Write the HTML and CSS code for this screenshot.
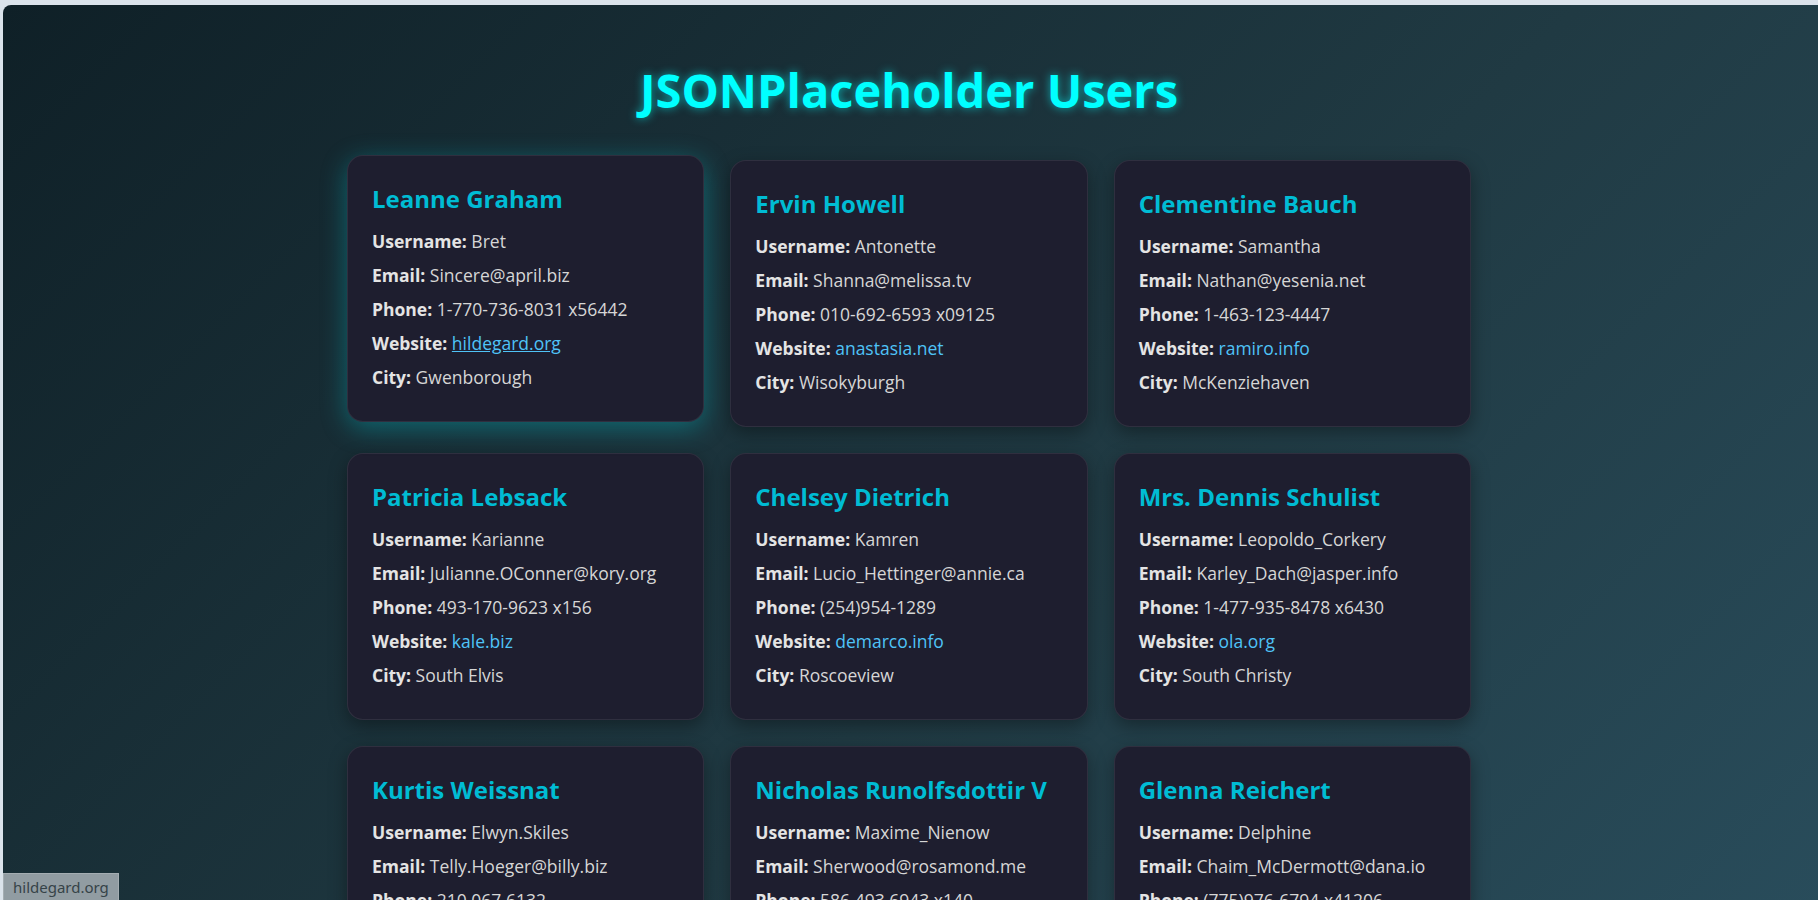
FILE: index.html
```html
<!DOCTYPE html>
<html lang="en">
<head>
<meta charset="utf-8">
<title>JSONPlaceholder Users</title>
<link rel="stylesheet" href="styles.css">
</head>
<body>
<main class="page">
  <h1 class="title">JSONPlaceholder Users</h1>
  <section class="grid">
    <article class="card is-hover">
      <h2 class="name">Leanne Graham</h2>
      <p class="row"><strong>Username:</strong> Bret</p>
      <p class="row"><strong>Email:</strong> Sincere@april.biz</p>
      <p class="row"><strong>Phone:</strong> 1-770-736-8031 x56442</p>
      <p class="row"><strong>Website:</strong> <a class="link is-hover-link" href="#">hildegard.org</a></p>
      <p class="row"><strong>City:</strong> Gwenborough</p>
    </article>
    <article class="card">
      <h2 class="name">Ervin Howell</h2>
      <p class="row"><strong>Username:</strong> Antonette</p>
      <p class="row"><strong>Email:</strong> Shanna@melissa.tv</p>
      <p class="row"><strong>Phone:</strong> 010-692-6593 x09125</p>
      <p class="row"><strong>Website:</strong> <a class="link" href="#">anastasia.net</a></p>
      <p class="row"><strong>City:</strong> Wisokyburgh</p>
    </article>
    <article class="card">
      <h2 class="name">Clementine Bauch</h2>
      <p class="row"><strong>Username:</strong> Samantha</p>
      <p class="row"><strong>Email:</strong> Nathan@yesenia.net</p>
      <p class="row"><strong>Phone:</strong> 1-463-123-4447</p>
      <p class="row"><strong>Website:</strong> <a class="link" href="#">ramiro.info</a></p>
      <p class="row"><strong>City:</strong> McKenziehaven</p>
    </article>
    <article class="card">
      <h2 class="name">Patricia Lebsack</h2>
      <p class="row"><strong>Username:</strong> Karianne</p>
      <p class="row"><strong>Email:</strong> Julianne.OConner@kory.org</p>
      <p class="row"><strong>Phone:</strong> 493-170-9623 x156</p>
      <p class="row"><strong>Website:</strong> <a class="link" href="#">kale.biz</a></p>
      <p class="row"><strong>City:</strong> South Elvis</p>
    </article>
    <article class="card">
      <h2 class="name">Chelsey Dietrich</h2>
      <p class="row"><strong>Username:</strong> Kamren</p>
      <p class="row"><strong>Email:</strong> Lucio_Hettinger@annie.ca</p>
      <p class="row"><strong>Phone:</strong> (254)954-1289</p>
      <p class="row"><strong>Website:</strong> <a class="link" href="#">demarco.info</a></p>
      <p class="row"><strong>City:</strong> Roscoeview</p>
    </article>
    <article class="card">
      <h2 class="name">Mrs. Dennis Schulist</h2>
      <p class="row"><strong>Username:</strong> Leopoldo_Corkery</p>
      <p class="row"><strong>Email:</strong> Karley_Dach@jasper.info</p>
      <p class="row"><strong>Phone:</strong> 1-477-935-8478 x6430</p>
      <p class="row"><strong>Website:</strong> <a class="link" href="#">ola.org</a></p>
      <p class="row"><strong>City:</strong> South Christy</p>
    </article>
    <article class="card">
      <h2 class="name">Kurtis Weissnat</h2>
      <p class="row"><strong>Username:</strong> Elwyn.Skiles</p>
      <p class="row"><strong>Email:</strong> Telly.Hoeger@billy.biz</p>
      <p class="row"><strong>Phone:</strong> 210.067.6132</p>
      <p class="row"><strong>Website:</strong> <a class="link" href="#">elvis.io</a></p>
      <p class="row"><strong>City:</strong> Howemouth</p>
    </article>
    <article class="card">
      <h2 class="name">Nicholas Runolfsdottir V</h2>
      <p class="row"><strong>Username:</strong> Maxime_Nienow</p>
      <p class="row"><strong>Email:</strong> Sherwood@rosamond.me</p>
      <p class="row"><strong>Phone:</strong> 586.493.6943 x140</p>
      <p class="row"><strong>Website:</strong> <a class="link" href="#">jacynthe.com</a></p>
      <p class="row"><strong>City:</strong> Aliyaview</p>
    </article>
    <article class="card">
      <h2 class="name">Glenna Reichert</h2>
      <p class="row"><strong>Username:</strong> Delphine</p>
      <p class="row"><strong>Email:</strong> Chaim_McDermott@dana.io</p>
      <p class="row"><strong>Phone:</strong> (775)976-6794 x41206</p>
      <p class="row"><strong>Website:</strong> <a class="link" href="#">conrad.com</a></p>
      <p class="row"><strong>City:</strong> Bartholomebury</p>
    </article>
    <article class="card">
      <h2 class="name">Clementina DuBuque</h2>
      <p class="row"><strong>Username:</strong> Moriah.Stanton</p>
      <p class="row"><strong>Email:</strong> Rey.Padberg@karina.biz</p>
      <p class="row"><strong>Phone:</strong> 024-648-3804</p>
      <p class="row"><strong>Website:</strong> <a class="link" href="#">ambrose.net</a></p>
      <p class="row"><strong>City:</strong> Lebsackbury</p>
    </article>
  </section>
</main>
<div class="status-bubble">hildegard.org</div>
</body>
</html>
```
FILE: styles.css
```css
* {
  box-sizing: border-box;
}

html,
body {
  margin: 0;
  padding: 0;
  background: #dbe3eb;
}

body {
  font-family: "Open Sans", "Noto Sans", "Liberation Sans", sans-serif;
}

.page {
  margin: 5px 0 0 3px;
  padding: 55px 3px 40px 0;
  border-top-left-radius: 8px;
  background: linear-gradient(135deg, #0f2027, #203a43, #2c5364);
  min-height: 1340px;
}

.title {
  margin: 0 0 40px;
  font-size: 47px;
  line-height: 60px;
  font-weight: 700;
  text-align: center;
  color: #00ffff;
  text-shadow: 0 0 10px rgba(0, 255, 255, 0.6);
}

.grid {
  display: grid;
  grid-template-columns: repeat(3, 1fr);
  gap: 26px;
  width: 1124px;
  margin: 0 auto;
}

.card {
  background: #1e1e2f;
  border: 1px solid rgba(255, 255, 255, 0.08);
  border-radius: 16px;
  padding: 28px 24px 27px;
  box-shadow: 0 6px 18px rgba(0, 0, 0, 0.35);
}

.card.is-hover {
  transform: translateY(-5px);
  box-shadow: 0 6px 26px rgba(0, 200, 210, 0.38);
}

.name {
  margin: 0 0 10px;
  font-size: 24px;
  line-height: 30px;
  font-weight: 700;
  color: #00bcd4;
  white-space: nowrap;
}

.row {
  margin: 0;
  font-size: 17.5px;
  line-height: 34px;
  color: #d6d6d6;
  white-space: nowrap;
}

.row strong {
  color: #e4e4e4;
  font-weight: 700;
}

.link {
  color: #4fc3f7;
  text-decoration: none;
}

.link.is-hover-link {
  text-decoration: underline;
}

.status-bubble {
  position: fixed;
  left: 3px;
  bottom: 0;
  height: 27px;
  padding: 3px 9px 0;
  background: #919ca2;
  border: 1px solid #a4adb2;
  border-bottom: 0;
  color: #364348;
  font-family: "Noto Sans", "Open Sans", sans-serif;
  font-size: 15px;
  line-height: 21px;
}
```
